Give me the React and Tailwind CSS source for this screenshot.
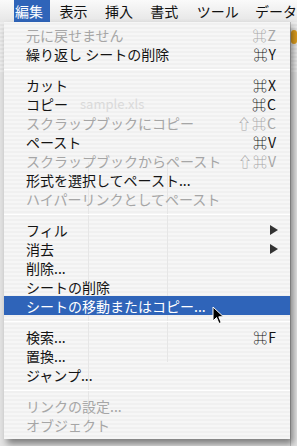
import React from 'react';

const font = { fontFamily: '"Noto Sans CJK JP", "Noto Sans", sans-serif' };

const items = [
    { label: '元に戻せません', key: '⌘Z', off: true },
    { label: '繰り返し シートの削除', key: '⌘Y' },
    'sep',
    { label: 'カット', key: '⌘X' },
    { label: 'コピー', key: '⌘C' },
    { label: 'スクラップブックにコピー', key: '⇧⌘C', off: true },
    { label: 'ペースト', key: '⌘V' },
    { label: 'スクラップブックからペースト', key: '⇧⌘V', off: true },
    { label: '形式を選択してペースト...' },
    { label: 'ハイパーリンクとしてペースト', off: true },
    'sep',
    { label: 'フィル', sub: true },
    { label: '消去', sub: true },
    { label: '削除...' },
    { label: 'シートの削除' },
    { label: 'シートの移動またはコピー...', active: true },
    'sep',
    { label: '検索...', key: '⌘F' },
    { label: '置換...' },
    { label: 'ジャンプ...' },
    'sep',
    { label: 'リンクの設定...', off: true },
    { label: 'オブジェクト', off: true },
];

const MenuRow = ({ item }) => {
    let color = 'text-[#141414]';
    if (item.off) color = 'text-[#a6a6a6]';
    if (item.active) color = 'text-white';
    return (
        <div className={`flex items-center h-[19px] pl-[22px] pr-[13px] text-[14px] leading-none ${color} ${item.active ? 'bg-[#2f64b9]' : ''}`}>
            <span className="flex-1 whitespace-nowrap">{item.label}</span>
            {item.key && <span className="whitespace-nowrap tracking-[1px]">{item.key}</span>}
            {item.sub && (
                <svg width="8" height="10" viewBox="0 0 8 10" className="mr-[-1px]">
                    <path d="M0 0 L8 5 L0 10 Z" fill="#333" />
                </svg>
            )}
        </div>
    );
};

const Separator = () => (
    <div className="flex items-center h-[12px]">
        <div className="w-full h-px bg-[#cfcfcf] border-b border-white" />
    </div>
);

export default function App() {
    return (
        <div className="relative w-[297px] h-[446px] overflow-hidden bg-[#e4e4e4]" style={font}>
            {/* app behind the menu */}
            <div className="absolute top-[22px] left-0 w-full h-[50px] bg-[repeating-linear-gradient(0deg,#ededed_0px,#ededed_2px,#e4e4e4_2px,#e4e4e4_4px)]" />
            <div className="absolute top-[30px] left-[291px] w-[6px] h-[14px] bg-[#e0a020] rounded-sm" />
            <div className="absolute top-[0px] left-[290px] w-px h-full bg-[#bdbdbd]" />

            {/* menu bar */}
            <div className="relative flex items-center h-[22px] bg-[linear-gradient(#fafafa,#e6e6e6)] text-[14px] text-[#111] leading-none">
                <div className="ml-[14px] w-[36px] h-full flex items-center pl-[1px] bg-[#2f64b9] text-white">編集</div>
                <div className="ml-[10px] w-[46px]">表示</div>
                <div className="w-[46px]">挿入</div>
                <div className="w-[47px]">書式</div>
                <div className="w-[59px]">ツール</div>
                <div className="whitespace-nowrap">データ</div>
            </div>

            {/* menu */}
            <div className="absolute left-[4px] top-[22px] w-[286px] pt-[3px] pb-[5px] bg-[repeating-linear-gradient(0deg,#f6f6f6_0px,#f6f6f6_2px,#f0f0f0_2px,#f0f0f0_4px)] shadow-[3px_5px_7px_rgba(0,0,0,0.45)]">
                <div className="absolute left-[76px] top-[72px] text-[13px] text-[#dadada]">sample.xls</div>
                <div className="absolute left-[84px] top-[140px] w-px h-[270px] bg-[#e6e6e6]" />
                <div className="absolute left-[163px] top-[140px] w-px h-[200px] bg-[#e6e6e6]" />
                <div className="relative">
                    {items.map((it, i) => (it === 'sep' ? <Separator key={i} /> : <MenuRow key={i} item={it} />))}
                </div>
            </div>

            {/* cursor */}
            <svg className="absolute left-[212px] top-[306px]" width="14" height="20" viewBox="0 0 14 20">
                <path d="M1 1 L1 15 L4.5 11.5 L7 17.5 L9.2 16.5 L6.8 10.8 L11.5 10.8 Z" fill="#000" stroke="#fff" strokeWidth="1" />
            </svg>
        </div>
    );
}
